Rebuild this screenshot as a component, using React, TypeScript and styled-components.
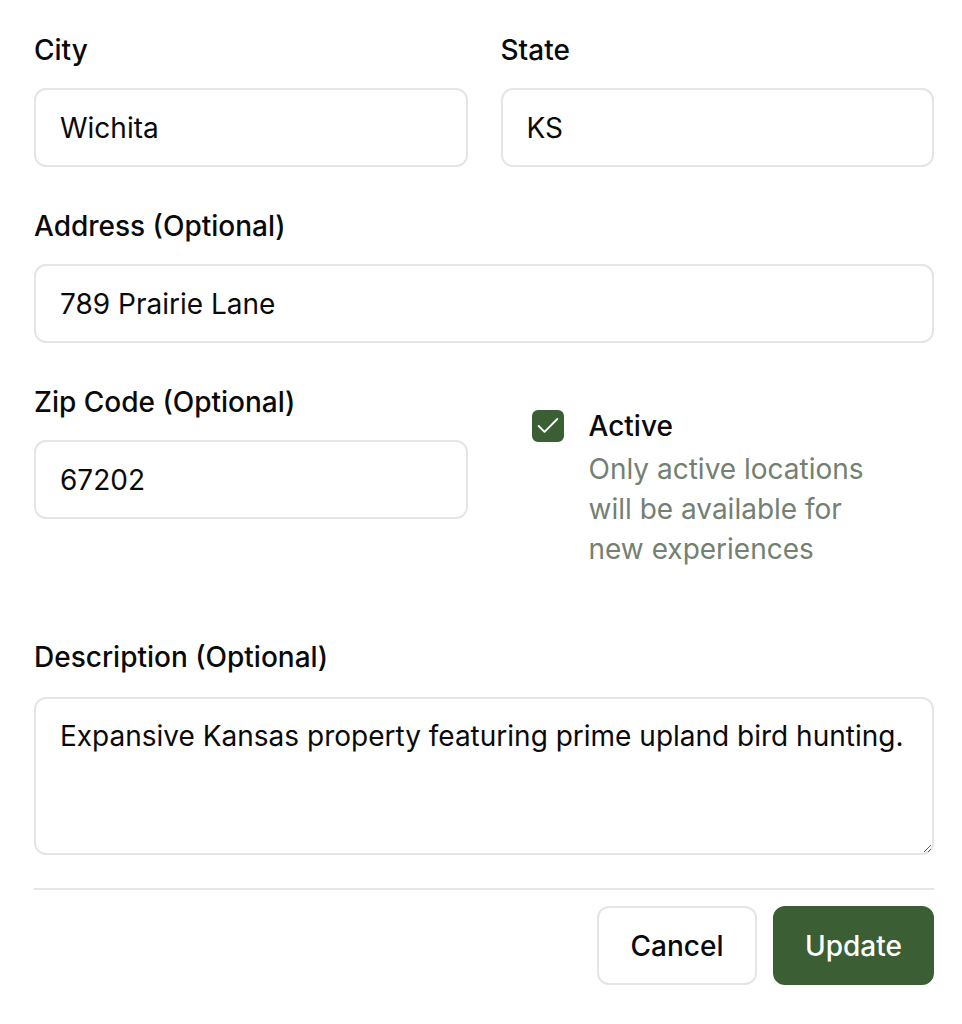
import React, { useState } from 'react';
import styled, { createGlobalStyle } from 'styled-components';
import { Check } from 'lucide-react';

const GlobalStyle = createGlobalStyle`
  * {
    box-sizing: border-box;
  }
  body {
    margin: 0;
    background: #ffffff;
    color: #0a0a0a;
    font-family: Inter, 'Liberation Sans', sans-serif;
  }
`;

const Form = styled.form`
  width: 900px;
  margin-left: 34px;
  padding-top: 30px;
  display: flex;
  flex-direction: column;
  gap: 39px;
`;

const TwoCols = styled.div`
  display: grid;
  grid-template-columns: 1fr 1fr;
  column-gap: 33px;
  align-items: start;
`;

const Field = styled.div<{ $gap?: number }>`
  display: flex;
  flex-direction: column;
  gap: ${(p) => p.$gap ?? 18}px;
`;

const Label = styled.label`
  font-size: 28px;
  line-height: 40px;
  font-weight: 500;
  color: #0a0a0a;
`;

const Input = styled.input`
  height: 79px;
  width: 100%;
  padding: 0 24px;
  border: 2px solid #e5e5e5;
  border-radius: 12px;
  background: #ffffff;
  font-family: inherit;
  font-size: 28px;
  line-height: 40px;
  color: #0a0a0a;
  outline: none;
`;

const TextArea = styled.textarea`
  height: 158px;
  width: 100%;
  padding: 17px 24px;
  border: 2px solid #e5e5e5;
  border-radius: 12px;
  background: #ffffff;
  font-family: inherit;
  font-size: 28px;
  line-height: 40px;
  color: #0a0a0a;
  outline: none;
  resize: vertical;
`;

const ActiveBlock = styled.div`
  display: flex;
  gap: 25px;
  padding: 24px 0 29px 31px;
`;

const CheckBox = styled.button<{ $checked: boolean }>`
  flex: none;
  width: 32px;
  height: 32px;
  margin-top: 4px;
  padding: 0;
  border-radius: 6px;
  border: 2px solid #3b5e34;
  background: ${(p) => (p.$checked ? '#3b5e34' : '#ffffff')};
  color: #ffffff;
  display: flex;
  align-items: center;
  justify-content: center;
  cursor: pointer;
`;

const ActiveText = styled.div`
  display: flex;
  flex-direction: column;
  gap: 3px;
`;

const ActiveTitle = styled.span`
  font-size: 28px;
  line-height: 40px;
  font-weight: 500;
  color: #0a0a0a;
`;

const Hint = styled.p`
  margin: 0;
  width: 300px;
  font-size: 28px;
  line-height: 40px;
  color: #738072;
`;

const Footer = styled.div`
  margin-top: -6px;
  border-top: 2px solid #e5e5e5;
  padding-top: 16px;
  display: flex;
  justify-content: flex-end;
  gap: 16px;
`;

const Button = styled.button<{ $primary?: boolean }>`
  height: 79px;
  width: ${(p) => (p.$primary ? '161px' : '160px')};
  border-radius: 12px;
  border: 2px solid ${(p) => (p.$primary ? '#3b5e34' : '#e5e5e5')};
  background: ${(p) => (p.$primary ? '#3b5e34' : '#ffffff')};
  color: ${(p) => (p.$primary ? '#ffffff' : '#0a0a0a')};
  font-family: inherit;
  font-size: 28px;
  font-weight: 500;
  cursor: pointer;
`;

export default function App() {
  const [active, setActive] = useState(true);

  return (
    <>
      <GlobalStyle />
      <Form onSubmit={(e) => e.preventDefault()}>
        <TwoCols>
          <Field>
            <Label htmlFor="city">City</Label>
            <Input id="city" defaultValue="Wichita" />
          </Field>
          <Field>
            <Label htmlFor="state">State</Label>
            <Input id="state" defaultValue="KS" />
          </Field>
        </TwoCols>

        <Field>
          <Label htmlFor="address">Address (Optional)</Label>
          <Input id="address" defaultValue="789 Prairie Lane" />
        </Field>

        <TwoCols>
          <Field>
            <Label htmlFor="zip">Zip Code (Optional)</Label>
            <Input id="zip" defaultValue="67202" />
          </Field>
          <ActiveBlock>
            <CheckBox
              type="button"
              role="checkbox"
              aria-checked={active}
              $checked={active}
              onClick={() => setActive((v) => !v)}
            >
              {active && <Check size={28} strokeWidth={1.6} />}
            </CheckBox>
            <ActiveText>
              <ActiveTitle>Active</ActiveTitle>
              <Hint>Only active locations will be available for new experiences</Hint>
            </ActiveText>
          </ActiveBlock>
        </TwoCols>

        <Field $gap={20}>
          <Label htmlFor="description">Description (Optional)</Label>
          <TextArea
            id="description"
            defaultValue="Expansive Kansas property featuring prime upland bird hunting."
          />
        </Field>

        <Footer>
          <Button type="button">Cancel</Button>
          <Button type="submit" $primary>
            Update
          </Button>
        </Footer>
      </Form>
    </>
  );
}
